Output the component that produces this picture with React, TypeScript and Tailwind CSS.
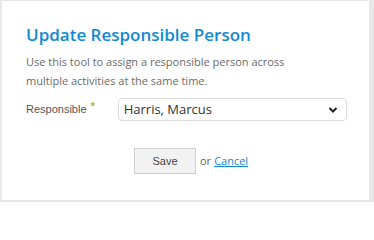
export default function App() {
  return (
    <div className="w-[374px] h-[202px] bg-[#e8e8e8] pl-[2px] pt-[1px] overflow-hidden">
      <div className="w-[367px] h-[199px] bg-white pl-[24px] pr-[22px] pt-[22px] font-['Open_Sans',sans-serif]">
        <h1 className="text-[17px] leading-[24px] font-semibold text-[#0f8ad4]">Update Responsible Person</h1>
        <p className="mt-[5px] text-[11px] leading-[19px] text-[#6b6b6b] w-[280px]">
          Use this tool to assign a responsible person across multiple activities at the same time.
        </p>
        <div className="mt-[8px] flex items-center">
          <div className="w-[92px] flex items-start font-['Liberation_Sans',sans-serif] text-[11px] text-[#555]">
            <span>Responsible</span>
            <span className="ml-[4px] -mt-[3px] text-[#8cc63f] text-[11px] font-bold">*</span>
          </div>
          <div className="w-[230px] h-[23px] border border-[#dcdcdc] rounded-[4px] flex items-center justify-between pl-[5px] pr-[8px]">
            <span className="text-[13px] text-[#333]">Harris, Marcus</span>
            <svg width="10" height="8" viewBox="0 0 10 8" fill="none">
              <path d="M1.5 2 L5 5.5 L8.5 2" stroke="#222" strokeWidth="2" />
            </svg>
          </div>
        </div>
        <div className="mt-[27px] flex items-center pl-[108px] font-['Liberation_Sans',sans-serif] text-[11px]">
          <button className="w-[62px] h-[26px] bg-[#f2f2f2] border border-[#cfcfcf] text-[#444]">Save</button>
          <span className="ml-[4px] text-[#666] font-['Open_Sans',sans-serif] text-[11px]">or</span>
          <a className="ml-[3px] text-[#0f8ad4] underline font-['Open_Sans',sans-serif] text-[11px]" href="#">Cancel</a>
        </div>
      </div>
    </div>
  );
}
